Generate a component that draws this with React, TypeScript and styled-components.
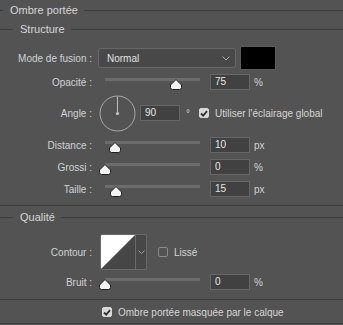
import styled, { createGlobalStyle } from "styled-components";

const GlobalStyle = createGlobalStyle`
  html, body {
    margin: 0;
    padding: 0;
    background: #535353;
  }
  body {
    font-family: "Liberation Sans", Arial, sans-serif;
    font-size: 10px;
    color: #d2d2d2;
  }
`;

const Panel = styled.div`
  width: 343px;
  height: 325px;
  background: #535353;
  overflow: hidden;
  display: flex;
  flex-direction: column;
`;

const Legend = styled.div<{ $indent: number; $height: number }>`
  display: flex;
  align-items: center;
  height: ${(p) => p.$height}px;
  &::before {
    content: "";
    width: ${(p) => p.$indent}px;
    height: 1px;
    background: #3d3d3d;
  }
  &::after {
    content: "";
    flex: 1;
    height: 1px;
    background: #3d3d3d;
  }
`;

const LegendText = styled.span`
  padding: 0 6px 0 7px;
  font-size: 11px;
  color: #d6d6d6;
`;

const Divider = styled.div`
  height: 1px;
  background: #3d3d3d;
`;

const Row = styled.div<{ $height: number; $mt: number }>`
  display: flex;
  align-items: center;
  height: ${(p) => p.$height}px;
  margin-top: ${(p) => p.$mt}px;
`;

const Label = styled.div<{ $gap: number }>`
  width: 92px;
  flex: none;
  text-align: right;
  margin-right: ${(p) => p.$gap}px;
  white-space: nowrap;
  color: #cfd3d6;
`;

const Select = styled.div`
  width: 138px;
  height: 20px;
  box-sizing: border-box;
  border: 1px solid #686868;
  border-radius: 3px;
  background: #484848;
  display: flex;
  align-items: center;
  justify-content: space-between;
  padding: 0 5px 0 8px;
  color: #e2e2e2;
`;

const Swatch = styled.div`
  width: 36px;
  height: 24px;
  box-sizing: border-box;
  margin-left: 4px;
  border: 1px solid #5c5c5c;
  background: #000;
`;

const SliderTrack = styled.div`
  position: relative;
  width: 95px;
  height: 14px;
  margin-left: 7px;
  margin-top: 6px;
  &::before {
    content: "";
    position: absolute;
    left: 0;
    right: 0;
    top: 0;
    height: 3px;
    background: #6c6c6c;
  }
`;

const Thumb = styled.svg`
  position: absolute;
  top: 1px;
  margin-left: -6px;
`;

const NumInput = styled.div<{ $ml: number }>`
  width: 40px;
  height: 16px;
  box-sizing: border-box;
  margin-left: ${(p) => p.$ml}px;
  border: 1px solid #666;
  background: #414141;
  padding-left: 4px;
  line-height: 14px;
  color: #e6e6e6;
`;

const Unit = styled.span<{ $ml: number }>`
  margin-left: ${(p) => p.$ml}px;
  color: #cfd3d6;
`;

const Dial = styled.svg`
  flex: none;
`;

const Check = styled.div<{ $on: boolean }>`
  width: 10px;
  height: 10px;
  box-sizing: border-box;
  border-radius: 2px;
  flex: none;
  background: ${(p) => (p.$on ? "#d8d8d8" : "transparent")};
  border: 1px solid ${(p) => (p.$on ? "#d8d8d8" : "#8a8a8a")};
  display: flex;
  align-items: center;
  justify-content: center;
`;

const CheckLabel = styled.span`
  margin-left: 6px;
  white-space: nowrap;
  color: #d6d6d6;
`;

const ContourBox = styled.div`
  display: flex;
  width: 47px;
  height: 36px;
  box-sizing: border-box;
  border: 1px solid #6a6a6a;
  border-radius: 2px;
  overflow: hidden;
`;

const ContourPreview = styled.svg`
  display: block;
`;

const ContourArrow = styled.div`
  flex: 1;
  background: #474747;
  border-left: 1px solid #6a6a6a;
  display: flex;
  align-items: center;
  justify-content: center;
`;

const Chevron = ({ size = 8 }: { size?: number }) => (
  <svg width={size} height={size / 2 + 1} viewBox="0 0 8 5">
    <path d="M0.5 0.5 L4 4 L7.5 0.5" fill="none" stroke="#a8a8a8" strokeWidth="1" />
  </svg>
);

const Tick = () => (
  <svg width="8" height="7" viewBox="0 0 8 7">
    <path d="M1 3.5 L3.2 5.6 L7 1.2" fill="none" stroke="#333" strokeWidth="1.8" />
  </svg>
);

const Slider = ({ value }: { value: number }) => (
  <SliderTrack>
    <Thumb width="12" height="11" viewBox="0 0 12 11" style={{ left: `${value}%` }}>
      <path
        d="M6 0.5 L11.5 6 L11.5 8.5 Q11.5 10.5 9.5 10.5 L2.5 10.5 Q0.5 10.5 0.5 8.5 L0.5 6 Z"
        fill="#f4f4f4"
        stroke="#1e1e1e"
        strokeWidth="1"
      />
    </Thumb>
  </SliderTrack>
);

const SliderRow = ({
  label,
  value,
  pos,
  unit,
  mt,
}: {
  label: string;
  value: string;
  pos: number;
  unit: string;
  mt: number;
}) => (
  <Row $height={18} $mt={mt}>
    <Label $gap={6}>{label}</Label>
    <Slider value={pos} />
    <NumInput $ml={10}>{value}</NumInput>
    <Unit $ml={4}>{unit}</Unit>
  </Row>
);

export default function App() {
  return (
    <>
      <GlobalStyle />
      <Panel>
        <Legend $indent={3} $height={20}>
          <LegendText>Ombre portée</LegendText>
        </Legend>
        <Legend $indent={13} $height={18}>
          <LegendText>Structure</LegendText>
        </Legend>

        <Row $height={24} $mt={8}>
          <Label $gap={6}>Mode de fusion :</Label>
          <Select>
            Normal
            <Chevron />
          </Select>
          <Swatch />
        </Row>

        <SliderRow label="Opacité :" value="75" pos={75} unit="%" mt={3} />

        <Row $height={38} $mt={3}>
          <Label $gap={7}>Angle :</Label>
          <Dial width="37" height="37" viewBox="0 0 37 37">
            <circle cx="18.5" cy="18.5" r="17.5" fill="none" stroke="#a9a9a9" strokeWidth="1" />
            <line x1="18.5" y1="1.5" x2="18.5" y2="18.5" stroke="#bdbdbd" strokeWidth="1" />
            <circle cx="18.5" cy="18.5" r="1.6" fill="#c4c4c4" />
          </Dial>
          <NumInput $ml={4}>90</NumInput>
          <Unit $ml={6}>°</Unit>
          <Check $on style={{ marginLeft: 9 }}>
            <Tick />
          </Check>
          <CheckLabel>Utiliser l'éclairage global</CheckLabel>
        </Row>

        <SliderRow label="Distance :" value="10" pos={10} unit="px" mt={4} />
        <SliderRow label="Grossi :" value="0" pos={0} unit="%" mt={4} />
        <SliderRow label="Taille :" value="15" pos={12} unit="px" mt={4} />

        <Divider style={{ marginTop: 7 }} />
        <Legend $indent={13} $height={22}>
          <LegendText>Qualité</LegendText>
        </Legend>

        <Row $height={36} $mt={6}>
          <Label $gap={8}>Contour :</Label>
          <ContourBox>
            <ContourPreview width="34" height="34" viewBox="0 0 34 34">
              <rect width="34" height="34" fill="#464646" />
              <polygon points="0,0 34,0 0,34" fill="#ffffff" />
            </ContourPreview>
            <ContourArrow>
              <Chevron size={7} />
            </ContourArrow>
          </ContourBox>
          <Check $on={false} style={{ marginLeft: 11 }} />
          <CheckLabel>Lissé</CheckLabel>
        </Row>

        <SliderRow label="Bruit :" value="0" pos={0} unit="%" mt={3} />

        <Divider style={{ marginTop: 8 }} />
        <Row $height={22} $mt={1}>
          <Check $on style={{ marginLeft: 102 }}>
            <Tick />
          </Check>
          <CheckLabel>Ombre portée masquée par le calque</CheckLabel>
        </Row>
        <Divider />
      </Panel>
    </>
  );
}
